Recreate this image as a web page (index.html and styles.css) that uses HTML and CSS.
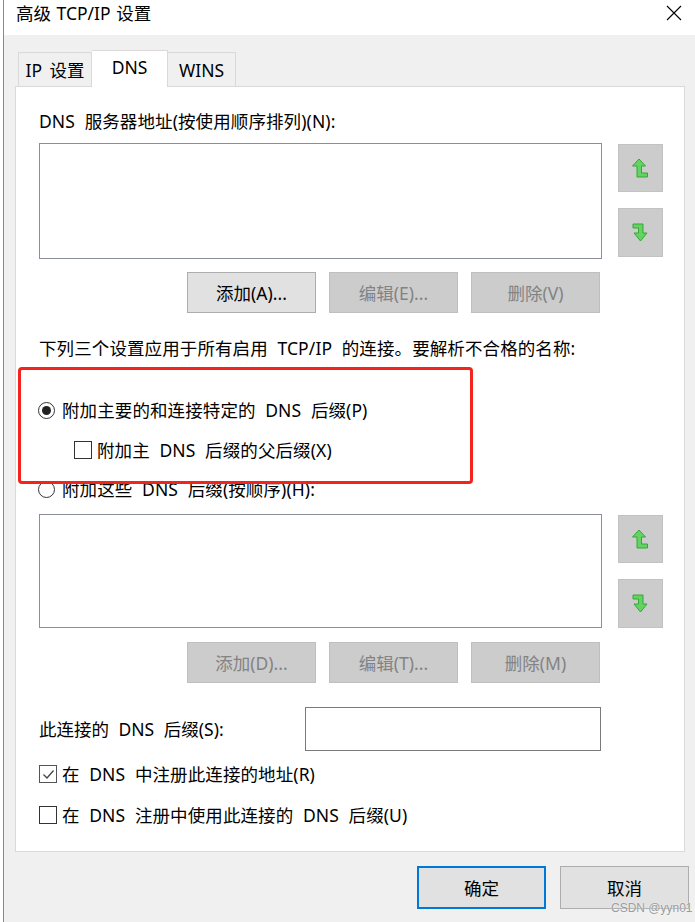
FILE: index.html
```html
<!DOCTYPE html>
<html lang="zh-CN">
<head>
<meta charset="UTF-8">
<title>高级 TCP/IP 设置</title>
<link rel="stylesheet" href="styles.css">
</head>
<body>
<div class="window">
  <div class="titlebar">
    <span class="title">高级 TCP/IP 设置</span>
    <svg class="close" width="16" height="16" viewBox="0 0 16 16"><path d="M1 1 L15 15 M15 1 L1 15" stroke="#000" stroke-width="1.1" fill="none"/></svg>
  </div>
  <div class="content">
    <div class="tabs">
      <div class="tab tab-ip">IP 设置</div>
      <div class="tab tab-dns active">DNS</div>
      <div class="tab tab-wins">WINS</div>
    </div>
    <div class="panel">
      <div class="line first">DNS 服务器地址(按使用顺序排列)(N):</div>
      <div class="list-row">
        <div class="listbox"></div>
        <div class="arrows">
          <div class="arrow up"><svg width="17" height="21" viewBox="0 0 17 21"><path d="M7 1 L13.5 8 H9.5 V15 H15.5 V19 H5 V8 H0.5 Z" fill="#62d462" stroke="#36a636" stroke-width="1"/></svg></div>
          <div class="arrow down"><svg width="17" height="21" viewBox="0 0 17 21"><path d="M1 2 H11 V11 H15 L8.5 19 L2 11 H6.5 V6 H1 Z" fill="#62d462" stroke="#36a636" stroke-width="1"/></svg></div>
        </div>
      </div>
      <div class="btn-row">
        <div class="btn">添加(A)...</div>
        <div class="btn disabled">编辑(E)...</div>
        <div class="btn disabled">删除(V)</div>
      </div>
      <div class="line intro">下列三个设置应用于所有启用 TCP/IP 的连接。要解析不合格的名称:</div>
      <div class="line option radio-1"><span class="radio checked"></span>附加主要的和连接特定的 DNS 后缀(P)</div>
      <div class="line option sub"><span class="check"></span>附加主 DNS 后缀的父后缀(X)</div>
      <div class="line option radio-2"><span class="radio"></span>附加这些 DNS 后缀(按顺序)(H):</div>
      <div class="list-row second">
        <div class="listbox short"></div>
        <div class="arrows">
          <div class="arrow up"><svg width="17" height="21" viewBox="0 0 17 21"><path d="M7 1 L13.5 8 H9.5 V15 H15.5 V19 H5 V8 H0.5 Z" fill="#62d462" stroke="#36a636" stroke-width="1"/></svg></div>
          <div class="arrow down"><svg width="17" height="21" viewBox="0 0 17 21"><path d="M1 2 H11 V11 H15 L8.5 19 L2 11 H6.5 V6 H1 Z" fill="#62d462" stroke="#36a636" stroke-width="1"/></svg></div>
        </div>
      </div>
      <div class="btn-row second">
        <div class="btn disabled">添加(D)...</div>
        <div class="btn disabled">编辑(T)...</div>
        <div class="btn disabled">删除(M)</div>
      </div>
      <div class="suffix-row">
        <span class="suffix-label">此连接的 DNS 后缀(S):</span>
        <div class="textbox"></div>
      </div>
      <div class="line option reg-1"><span class="check checked"><svg width="15" height="15" viewBox="0 0 15 15"><path d="M2.5 7.5 L6 11 L12.5 3.5" stroke="#444" stroke-width="1.3" fill="none"/></svg></span>在 DNS 中注册此连接的地址(R)</div>
      <div class="line option reg-2"><span class="check"></span>在 DNS 注册中使用此连接的 DNS 后缀(U)</div>
    </div>
    <div class="footer">
      <div class="btn default">确定</div>
      <div class="btn">取消</div>
    </div>
  </div>
</div>
<div class="annotation"></div>
<div class="watermark">CSDN @yyn01</div>
</body>
</html>
```

FILE: styles.css
```css
body { margin: 0; width: 695px; height: 922px; overflow: hidden; background: #fff; font-family: "Noto Sans", "Noto Sans CJK SC", sans-serif; font-size: 17.5px; word-spacing: 5px; color: #000; position: relative; }
.window { margin-left: 3px; border-left: 1px solid #8a8a8a; background: #f0f0f0; height: 922px; }
.titlebar { height: 35px; background: #fff; display: flex; align-items: flex-start; justify-content: space-between; padding: 1px 12px 0 12px; box-sizing: border-box; }
.title { line-height: 24px; word-spacing: 1px; }
.close { margin-top: 4px; margin-right: 1px; }
.content { padding-top: 15px; }
.tabs { display: flex; align-items: flex-end; margin-left: 14px; height: 36px; }
.tab { box-sizing: border-box; height: 34px; border: 1px solid #d9d9d9; border-bottom: 0; background: #f0f0f0; display: flex; align-items: center; justify-content: center; word-spacing: 3px; }
.tab-ip { width: 74px; }
.tab-dns { width: 76px; }
.tab-wins { width: 69px; margin-left: -1px; }
.tab.active { height: 37px; margin-bottom: -1px; background: #fff; position: relative; z-index: 1; padding-bottom: 4px; border-left: 0; }
.panel { box-sizing: border-box; margin-left: 11px; width: 670px; height: 766px; border: 1px solid #d9d9d9; background: #fff; padding-left: 23px; }
.line { line-height: 24px; height: 24px; white-space: nowrap; letter-spacing: 0.1px; }
.first { margin-top: 22px; }
.list-row { display: flex; margin-top: 10px; }
.list-row.second { margin-top: 13px; }
.listbox { box-sizing: border-box; width: 563px; height: 116px; border: 1px solid #8a8f98; background: #fff; }
.listbox.short { height: 114px; }
.arrows { margin-left: 16px; padding-top: 1px; display: flex; flex-direction: column; gap: 16px; }
.arrow { box-sizing: border-box; width: 45px; height: 48px; background: #cccccc; border: 1px solid #c2c2c2; display: flex; align-items: center; justify-content: center; }
.arrow.down { height: 49px; }
.btn-row { display: flex; gap: 13px; margin-top: 13px; padding-left: 148px; }
.btn-row.second { margin-top: 14px; }
.btn { box-sizing: border-box; width: 129px; height: 41px; background: #e1e1e1; border: 1px solid #adadad; display: flex; align-items: center; justify-content: center; }
.btn.disabled { background: #cccccc; border-color: #bfbfbf; color: #838383; }
.intro { margin-top: 23px; }
.option { display: flex; align-items: center; }
.radio-1 { margin-top: 38px; }
.sub { margin-top: 16px; padding-left: 35px; }
.radio-2 { margin-top: 15px; }
.radio { box-sizing: border-box; width: 17px; height: 17px; border: 1px solid #333; border-radius: 50%; margin: 0 7px 0 -1px; display: flex; align-items: center; justify-content: center; background: #fff; }
.radio.checked::after { content: ""; width: 9px; height: 9px; border-radius: 50%; background: #222; }
.check { box-sizing: border-box; width: 18px; height: 18px; border: 1px solid #333; margin-right: 5px; display: flex; align-items: center; justify-content: center; background: #fff; }
.check.checked { border-color: #555; }
.suffix-row { display: flex; align-items: center; margin-top: 24px; }
.suffix-label { width: 266px; line-height: 24px; }
.textbox { box-sizing: border-box; width: 296px; height: 44px; border: 1px solid #7a7a7a; background: #fff; }
.reg-1 { margin-top: 11px; }
.reg-2 { margin-top: 17px; }
.footer { display: flex; justify-content: flex-end; gap: 14px; margin-top: 14px; padding-right: 6px; }
.footer .btn { height: 43px; }
.btn.default { border: 2px solid #0078d7; }
.annotation { position: absolute; left: 18px; top: 367px; width: 455px; height: 117px; box-sizing: border-box; border: 3px solid #f3241c; border-radius: 4px; pointer-events: none; }
.watermark { position: absolute; left: 611px; top: 900px; font-family: "Liberation Sans", sans-serif; font-size: 12px; line-height: 16px; color: #9c9c9c; text-shadow: 0 0 2px #fff; word-spacing: 0; }
```
